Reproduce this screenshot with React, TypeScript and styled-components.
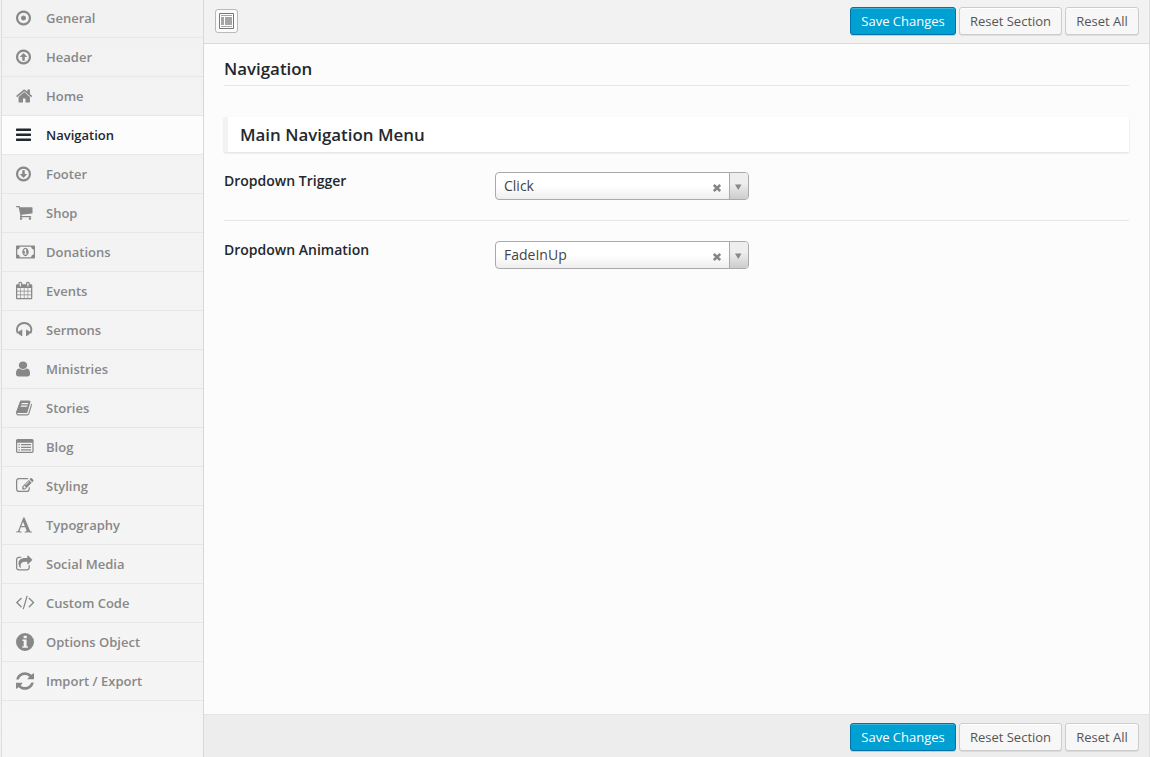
import React from "react";
import styled, { createGlobalStyle } from "styled-components";

const Global = createGlobalStyle`
  * { box-sizing: border-box; }
  body { margin: 0; background: #f1f1f1; font-family: "Open Sans", sans-serif; font-size: 13px; color: #444; }
`;

const Frame = styled.div`
  display: flex;
  width: 1149px;
  height: 757px;
  margin-left: 1px;
  overflow: hidden;
  border: solid #dedede;
  border-width: 0 1px;
`;

const Sidebar = styled.nav`
  flex: none;
  width: 202px;
  border-right: 1px solid #d8d8d8;
  background: linear-gradient(#f2f2f2, #f5f5f5);
  margin-top: -1px;
`;

const Item = styled.a<{ $active?: boolean }>`
  display: flex;
  align-items: center;
  height: 39px;
  padding-left: 14px;
  border-bottom: 1px solid #e7e7e7;
  background: ${(p) => (p.$active ? "#fcfcfc" : "transparent")};
  color: ${(p) => (p.$active ? "#23282d" : "#888")};
  font-weight: 600;
  line-height: 18px;
`;

const IconSlot = styled.span`
  display: flex;
  flex: none;
  width: 30px;
  svg { display: block; fill: currentColor; overflow: visible; }
`;

const Main = styled.main`
  flex: 1;
  display: flex;
  flex-direction: column;
  background: #fcfcfc;
`;

const Bar = styled.div<{ $bottom?: boolean }>`
  display: flex;
  flex: none;
  align-items: flex-start;
  gap: 3px;
  height: ${(p) => (p.$bottom ? 43 : 44)}px;
  padding: ${(p) => (p.$bottom ? "8px" : "7px")} 10px 0 11px;
  background: ${(p) => (p.$bottom ? "#ededed" : "#f2f2f2")};
  border: solid ${(p) => (p.$bottom ? "#e4e4e4" : "#dadada")};
  border-width: ${(p) => (p.$bottom ? "1px 0 0" : "0 0 1px")};
`;

const Expand = styled.button`
  display: flex;
  align-items: center;
  justify-content: center;
  width: 23px;
  height: 24px;
  margin-top: 2px;
  padding: 0;
  border: 1px solid #b9b9b9;
  border-radius: 3px;
  background: #fbfbfb;
`;

const Spacer = styled.span`
  flex: 1;
`;

const Button = styled.button<{ $primary?: boolean; $width: number }>`
  width: ${(p) => p.$width}px;
  height: 28px;
  padding: 0;
  border: 1px solid ${(p) => (p.$primary ? "#0073aa" : "#ccc")};
  border-radius: 3px;
  background: ${(p) => (p.$primary ? "#00a0d2" : "#f7f7f7")};
  box-shadow: ${(p) =>
    p.$primary
      ? "inset 0 1px 0 rgba(120, 200, 230, .5), 0 1px 0 rgba(0, 0, 0, .15)"
      : "inset 0 1px 0 #fff, 0 1px 0 rgba(0, 0, 0, .08)"};
  color: ${(p) => (p.$primary ? "#fff" : "#555")};
  font: 13px/26px "Open Sans", sans-serif;
  white-space: nowrap;
`;

const Content = styled.section`
  flex: 1;
  padding: 13px 20px 0 20px;
`;

const Title = styled.h2`
  height: 29px;
  margin: 0 0 31px;
  border-bottom: 1px solid #e7e7e7;
  color: #23282d;
  font-size: 16.9px;
  font-weight: 600;
  line-height: 24px;
`;

const SectionTitle = styled.h3`
  height: 35px;
  margin: 0 0 1px;
  padding-left: 12px;
  border-left: 4px solid #f3f3f3;
  background: #fff;
  box-shadow: 0 1px 2px rgba(0, 0, 0, .13);
  color: #23282d;
  font-size: 16.9px;
  font-weight: 600;
  line-height: 36px;
`;

const Field = styled.div<{ $last?: boolean }>`
  display: flex;
  align-items: flex-start;
  height: ${(p) => (p.$last ? 70 : 68)}px;
  padding-top: ${(p) => (p.$last ? 20 : 19)}px;
  border-bottom: ${(p) => (p.$last ? "none" : "1px solid #e7e7e7")};
`;

const Label = styled.label`
  width: 271px;
  color: #23282d;
  font-size: 14px;
  font-weight: 600;
  line-height: 18px;
`;

const Select = styled.div`
  display: flex;
  width: 254px;
  height: 28px;
  border: 1px solid #aaa;
  border-radius: 4px;
  background: linear-gradient(#fff 50%, #eee 100%);
  overflow: hidden;
`;

const Value = styled.span`
  flex: 1;
  padding-left: 8px;
  color: #444;
  font-size: 14px;
  line-height: 26px;
`;

const Clear = styled.svg`
  margin: 11px 8px 0 0;
`;

const Arrow = styled.span`
  display: flex;
  width: 19px;
  padding: 11px 0 0 5px;
  border-left: 1px solid #aaa;
  background: linear-gradient(#eee 40%, #ccc);
`;

const RING =
  "M896 352q-148 0-273 73t-198 198-73 273 73 273 198 198 273 73 273-73 198-198 73-273-73-273-198-198-273-73zm768 544q0 209-103 385.5t-279.5 279.5-385.5 103-385.5-103-279.5-279.5-103-385.5 103-385.5 279.5-279.5 385.5-103 385.5 103 279.5 279.5 103 385.5z";

type Entry = { label: string; box: string; w: number; h: number; dy?: number; d: string };

const entries: Entry[] = [
  { label: "General", box: "128 128 1536 1536", w: 15, h: 15, dy: -0.5, d: "M1152 896q0 106-75 181t-181 75-181-75-75-181 75-181 181-75 181 75 75 181z" + RING },
  { label: "Header", box: "128 128 1536 1536", w: 15, h: 15, dy: -0.5, d: RING + "M1248 864q0 14-9 23t-23 9h-192v352q0 13-9.500 22.500t-22.500 9.500h-192q-13 0-22.500-9.500t-9.500-22.500v-352h-192q-14 0-23-9t-9-23q0-12 10-24l319-319q11-9 23-9t23 9l320 320q9 9 9 23z" },
  { label: "Home", box: "60 253 1672 1283", w: 16.500, h: 13, dy: -0.5, d: "M1472 992v480q0 26-19 45t-45 19h-384v-384h-256v384h-384q-26 0-45-19t-19-45v-480q0-1 .5-3t.5-3l575-474 575 474q1 2 1 6zm223-69l-62 74q-8 9-21 11h-3q-13 0-21-7l-692-577-692 577q-12 8-24 7-13-2-21-11l-62-74q-8-10-7-23.500t11-21.500l719-599q32-26 76-26t76 26l244 204v-195q0-14 9-23t23-9h192q14 0 23 9t9 23v408l219 182q10 8 11 21.500t-7 23.500z" },
  { label: "Navigation", box: "128 256 1536 1280", w: 15, h: 12.500, dy: -0.5, d: "M1664 1344v128q0 26-19 45t-45 19h-1408q-26 0-45-19t-19-45v-128q0-26 19-45t45-19h1408q26 0 45 19t19 45zm0-512v128q0 26-19 45t-45 19h-1408q-26 0-45-19t-19-45v-128q0-26 19-45t45-19h1408q26 0 45 19t19 45zm0-512v128q0 26-19 45t-45 19h-1408q-26 0-45-19t-19-45v-128q0-26 19-45t45-19h1408q26 0 45 19t19 45z" },
  { label: "Footer", box: "128 128 1536 1536", w: 15, h: 15, dy: -0.5, d: RING + "M1248 928q0-14-9-23t-23-9h-192v-352q0-13-9.500-22.500t-22.500-9.500h-192q-13 0-22.500 9.500t-9.500 22.500v352h-192q-14 0-23 9t-9 23q0 12 10 24l319 319q11 9 23 9t23-9l320-320q9-9 9-23z" },
  { label: "Shop", box: "64 256 1664 1408", w: 16.500, h: 13.800, d: "M704 1536q0 52-38 90t-90 38-90-38-38-90 38-90 90-38 90 38 38 90zm896 0q0 52-38 90t-90 38-90-38-38-90 38-90 90-38 90 38 38 90zm128-1088v512q0 24-16.500 42.500t-40.500 21.500l-1044 122q13 60 13 70 0 16-24 64h920q26 0 45 19t19 45-19 45-45 19h-1024q-26 0-45-19t-19-45q0-11 8-31.500t16-36 21.500-40 15.500-29.500l-177-823h-204q-26 0-45-19t-19-45 19-45 45-19h256q16 0 28.500 6.500t19.500 15.500 13 24.500 8 26 5.500 29.500 4.500 26h1201q26 0 45 19t19 45z" },
  { label: "Donations", box: "0 256 1920 1280", w: 19, h: 13, dy: -0.5, d: "M768 1152h384v-96h-128v-448h-114l-148 137 77 80q42-37 55-57h2v288h-128v96zm512-256q0 70-21 142t-59.500 134-101.500 101-138 39-138-39-101.500-101-59.500-134-21-142 21-142 59.500-134 101.500-101 138-39 138 39 101.500 101 59.500 134 21 142zm512 256v-512q-106 0-181-75t-75-181h-1152q0 106-75 181t-181 75v512q106 0 181 75t75 181h1152q0-106 75-181t181-75zm128-832v1152q0 26-19 45t-45 19h-1792q-26 0-45-19t-19-45v-1152q0-26 19-45t45-19h1792q26 0 45 19t19 45z" },
  { label: "Events", box: "64 0 1664 1792", w: 16.300, h: 17.500, dy: -0.25, d: "M192 1664h288v-288h-288v288zm352 0h320v-288h-320v288zm-352-352h288v-320h-288v320zm352 0h320v-320h-320v320zm-352-384h288v-288h-288v288zm736 736h320v-288h-320v288zm-384-736h320v-288h-320v288zm768 736h288v-288h-288v288zm-384-352h320v-320h-320v320zm-352-864v-288q0-13-9.500-22.500t-22.500-9.500h-64q-13 0-22.500 9.500t-9.500 22.500v288q0 13 9.500 22.500t22.500 9.500h64q13 0 22.500-9.500t9.500-22.500zm736 864h288v-320h-288v320zm-384-384h320v-288h-320v288zm384 0h288v-288h-288v288zm32-480v-288q0-13-9.500-22.500t-22.500-9.500h-64q-13 0-22.500 9.500t-9.500 22.500v288q0 13 9.500 22.500t22.500 9.500h64q13 0 22.500-9.500t9.500-22.500zm384-64v1280q0 52-38 90t-90 38h-1408q-52 0-90-38t-38-90v-1280q0-52 38-90t90-38h128v-96q0-66 47-113t113-47h64q66 0 113 47t47 113v96h384v-96q0-66 47-113t113-47h64q66 0 113 47t47 113v96h128q52 0 90 38t38 90z" },
  { label: "Sermons", box: "64 128 1664 1408", w: 16.300, h: 14, dy: -1, d: "M1728 886q0 166-60 314l-20 49-185 33q-22 83-90.500 136.500t-156.500 53.500v32q0 14-9 23t-23 9h-64q-14 0-23-9t-9-23v-576q0-14 9-23t23-9h64q14 0 23 9t9 23v32q71 0 130 35.500t93 95.500l68-12q29-95 29-193 0-148-88-279t-236.500-209-315.500-78-315.500 78-236.500 209-88 279q0 98 29 193l68 12q34-60 93-95.500t130-35.500v-32q0-14 9-23t23-9h64q14 0 23 9t9 23v576q0 14-9 23t-23 9h-64q-14 0-23-9t-9-23v-32q-88 0-156.500-53.500t-90.500-136.500l-185-33-20-49q-60-148-60-314 0-151 67-291t179-242.500 266-163.500 320-61 320 61 266 163.500 179 242.500 67 291z" },
  { label: "Ministries", box: "256 128 1280 1536", w: 14, h: 15, dy: -0.5, d: "M1536 1399q0 109-62.500 187t-150.500 78h-854q-88 0-150.500-78t-62.500-187q0-85 8.500-160.500t31.500-152 58.500-131 94-89 134.500-34.500q131 128 313 128t313-128q76 0 134.500 34.500t94 89 58.500 131 31.500 152 8.500 160.500zm-256-887q0 159-112.500 271.500t-271.500 112.500-271.500-112.500-112.500-271.500 112.500-271.500 271.500-112.500 271.500 112.500 112.500 271.500z" },
  { label: "Stories", box: "64 128 1666 1536", w: 16, h: 15, dy: -0.5, d: "M1703 478q40 57 18 129l-275 906q-19 64-76.500 107.500t-122.500 43.500h-923q-77 0-148.500-53.500t-99.500-131.500q-24-67-2-127 0-4 3-27t4-37q1-8-3-21.500t-3-19.500q2-11 8-21t16.500-23.500 16.500-23.500q23-38 45-91.500t30-91.500q3-10 .5-30t-.5-28q3-11 17-28t17-23q21-36 42-92t25-90q1-9-2.500-32t.5-28q4-13 22-30.500t22-22.500q19-26 42.500-84.500t27.500-96.500q1-8-3-25.500t-2-26.500q2-8 9-18t18-23 17-21q8-12 16.500-30.500t15-35 16-36 19.500-32 26.500-23.500 36-11.500 47.500 5.500l-1 3q38-9 51-9h761q74 0 114 56t18 130l-274 906q-36 119-71.500 153.500t-128.500 34.500h-869q-27 0-38 15-11 16-1 43 24 70 144 70h923q29 0 56-15.500t35-41.500l300-987q7-22 5-57 38 15 59 43zm-1064 2q-4 13 2 22.500t20 9.500h608q13 0 25.500-9.500t16.500-22.500l21-64q4-13-2-22.500t-20-9.500h-608q-13 0-25.500 9.500t-16.500 22.500zm-83 256q-4 13 2 22.500t20 9.500h608q13 0 25.500-9.500t16.500-22.500l21-64q4-13-2-22.500t-20-9.500h-608q-13 0-25.500 9.500t-16.500 22.500z" },
  { label: "Blog", box: "0 128 1792 1408", w: 17.600, h: 14, dy: -1, d: "M160 128h1472q66 0 113 47t47 113v1088q0 66-47 113t-113 47h-1472q-66 0-113-47t-47-113v-1088q0-66 47-113t113-47zM128 512v864q0 32 32 32h1472q32 0 32-32v-864zM256 640h128v128h-128zM256 896h128v128h-128zM256 1152h128v128h-128zM512 640h1024v128h-1024zM512 896h1024v128h-1024zM512 1152h1024v128h-1024z" },
  { label: "Styling", box: "0 128 1784 1408", w: 17.500, h: 14, dy: -1, d: "M888 1184l116-116-152-152-116 116v56h96v96h56zm440-720q-16-16-33 1l-350 350q-17 17-1 33t33-1l350-350q17-17 1-33zm80 594v190q0 119-84.500 203.500t-203.500 84.500h-832q-119 0-203.500-84.500t-84.500-203.500v-832q0-119 84.500-203.500t203.500-84.500h832q63 0 117 25 15 7 18 23 3 17-9 29l-49 49q-14 14-32 8-23-6-45-6h-832q-66 0-113 47t-47 113v832q0 66 47 113t113 47h832q66 0 113-47t47-113v-126q0-13 9-22l64-64q15-15 35-7t20 29zm-96-738l288 288-672 672h-288v-288zm444 132l-92 92-288-288 92-92q28-28 68-28t68 28l152 152q28 28 28 68t-28 68z" },
  { label: "Typography", box: "64 128 1664 1536", w: 16, h: 15, dy: -0.5, d: "M789 559l-170 450q33 0 136.500 2t160.500 2q19 0 57-2-87-253-184-452zm-725 1105l2-79q23-7 56-12.500t57-10.500 49.500-14.500 44.500-29 31-50.500l237-616 280-724h128q8 14 11 21l205 480q33 78 106 257.500t114 274.500q15 34 58 144.500t72 168.500q20 45 35 57 19 15 88 29.500t84 20.500q6 38 6 57 0 5-.5 13.500t-.5 12.500q-63 0-190-8t-191-8q-76 0-215 7t-178 8q0-43 4-78l131-28q1 0 12.500-2.500t15.500-3.500 14.500-4.500 15-6.500 11-8 9-11 2.500-14q0-16-31-96.500t-72-177.500-42-100l-450-2q-26 58-76.500 195.500t-50.500 162.500q0 22 14 37.500t43.500 24.500 48.500 13.500 57 8.500 41 4q1 19 1 58 0 9-2 27-58 0-174.500-10t-174.500-10q-8 0-26.500 4t-21.500 4q-80 14-188 14z" },
  { label: "Social Media", box: "64 0 1664 1536", w: 16.300, h: 15, dy: -1.5, d: "M1472 989v259q0 119-84.500 203.500t-203.500 84.500h-832q-119 0-203.500-84.500t-84.500-203.500v-832q0-119 84.500-203.500t203.500-84.500h255q13 0 22.500 9.500t9.500 22.500q0 27-26 32-77 26-133 60-10 4-16 4h-112q-66 0-113 47t-47 113v832q0 66 47 113t113 47h832q66 0 113-47t47-113v-214q0-19 18-29 28-13 54-37 16-16 35-8 21 9 21 29zm237-496l-384 384q-18 19-45 19-12 0-25-5-39-17-39-59v-192h-160q-323 0-438 131-119 137-74 473 3 23-20 34-8 2-12 2-16 0-26-13-10-14-21-31t-39.500-68.500-49.500-99.500-38.500-114-17.500-122q0-49 3.500-91t14-90 28-88 47-81.500 68.500-74 94.500-61.500 124.500-48.500 159.500-30.500 196.500-11h160v-192q0-42 39-59 13-5 25-5 26 0 45 19l384 384q19 19 19 45t-19 45z" },
  { label: "Custom Code", box: "40 300 1840 1350", w: 18.400, h: 13.400, d: "M617 1399l-50 50q-10 10-23 10t-23-10l-466-466q-10-10-10-23t10-23l466-466q10-10 23-10t23 10l50 50q10 10 10 23t-10 23l-393 393 393 393q10 10 10 23t-10 23zm591-1067l-373 1291q-4 13-15.500 19.500t-23.500 2.500l-62-17q-13-4-19.500-15.500t-2.500-24.500l373-1291q4-13 15.500-19.500t23.500-2.500l62 17q13 4 19.500 15.500t2.500 24.500zm657 651l-466 466q-10 10-23 10t-23-10l-50-50q-10-10-10-23t10-23l393-393-393-393q-10-10-10-23t10-23l50-50q10-10 23-10t23 10l466 466q10 10 10 23t-10 23z" },
  { label: "Options Object", box: "0 0 18 18", w: 18, h: 18, d: "M9 0a9 9 0 1 1 0 18a9 9 0 1 1 0-18zM7.600 2.800v2.400h3.200v-2.400zM6.400 6.600v1.300h1.300v5.400h-1.400v1.400h5.600v-1.400h-1.300v-6.700z" },
  { label: "Import / Export", box: "0 0 18 18", w: 18, h: 18, d: "M.2 7.500C1 3.200 4.600 .2 8.900 .2C11.400 .2 13.600 1.200 15.300 2.800L18 1V7.200H11.300L13.300 4.600C12.100 3.500 10.600 2.900 8.900 2.900C6 2.900 3.500 4.800 2.800 7.500ZM17.800 10.500C17 14.800 13.400 17.800 9.100 17.800C6.600 17.800 4.400 16.800 2.700 15.200L0 17V10.800H6.700L4.700 13.400C5.900 14.500 7.400 15.100 9.100 15.100C12 15.100 14.500 13.200 15.200 10.500Z" },
];

const Glyph = ({ entry }: { entry: Entry }) => (
  <svg
    width={entry.w}
    height={entry.h}
    viewBox={entry.box}
    preserveAspectRatio="none"
    transform={entry.dy ? `translate(0 ${entry.dy})` : undefined}
  >
    <path fillRule="evenodd" d={entry.d} />
  </svg>
);

const Actions = () => (
  <>
    <Button $primary $width={106}>Save Changes</Button>
    <Button $width={103}>Reset Section</Button>
    <Button $width={74}>Reset All</Button>
  </>
);

const Dropdown = ({ value }: { value: string }) => (
  <Select>
    <Value>{value}</Value>
    <Clear width="8" height="8" viewBox="0 0 8 8">
      <path d="M.8 1L7.200 7M7.200 1L.8 7" stroke="#858585" strokeWidth="2.500" />
    </Clear>
    <Arrow>
      <svg width="7" height="6" viewBox="0 0 7 6">
        <path d="M0 .5H6.500L3.250 6Z" fill="#888" />
      </svg>
    </Arrow>
  </Select>
);

export default function App() {
  return (
    <>
      <Global />
      <Frame>
        <Sidebar>
          {entries.map((entry) => (
            <Item key={entry.label} $active={entry.label === "Navigation"}>
              <IconSlot>
                <Glyph entry={entry} />
              </IconSlot>
              {entry.label}
            </Item>
          ))}
        </Sidebar>
        <Main>
          <Bar>
            <Expand>
              <svg width="15" height="16" viewBox="0 0 15 16">
                <path d="M.5 .5H14.500V15.500H.5Z" fill="#fff" stroke="#777" />
                <path d="M2 2H13V3H2ZM2 4H5V12H2ZM6 4H13V12H6ZM2 13H13V14H2Z" fill="#a5a5a5" />
              </svg>
            </Expand>
            <Spacer />
            <Actions />
          </Bar>
          <Content>
            <Title>Navigation</Title>
            <SectionTitle>Main Navigation Menu</SectionTitle>
            <Field>
              <Label>Dropdown Trigger</Label>
              <Dropdown value="Click" />
            </Field>
            <Field $last>
              <Label>Dropdown Animation</Label>
              <Dropdown value="FadeInUp" />
            </Field>
          </Content>
          <Bar $bottom>
            <Spacer />
            <Actions />
          </Bar>
        </Main>
      </Frame>
    </>
  );
}
